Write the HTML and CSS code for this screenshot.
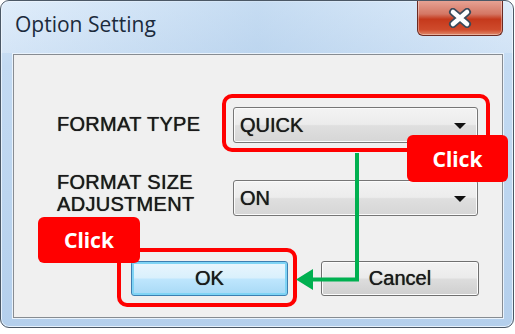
FILE: index.html
```html
<!DOCTYPE html>
<html lang="en">
<head>
    <meta charset="UTF-8">
    <meta name="viewport" content="width=device-width, initial-scale=1.0">
    <title>Option Setting</title>
    <link rel="stylesheet" href="styles.css">
</head>
<body>
    <div class="stage">
        <!-- Dialog window -->
        <div class="window">
            <div class="titlebar">
                <span class="title">Option Setting</span>
                <button class="close-btn" aria-label="Close">
                    <svg width="28" height="20" viewBox="0 0 28 20">
                        <path d="M7 4 L21 16 M21 4 L7 16" stroke="#3b4a5a" stroke-width="8" stroke-linecap="round"/>
                        <path d="M7 4 L21 16 M21 4 L7 16" stroke="#ffffff" stroke-width="4.5" stroke-linecap="round"/>
                    </svg>
                </button>
            </div>
            <div class="panel">
                <div class="form-grid">
                    <label class="field-label">FORMAT TYPE</label>
                    <div class="combo"><span>QUICK</span><i class="arrow"></i></div>

                    <label class="field-label two-line">FORMAT SIZE<br>ADJUSTMENT</label>
                    <div class="combo"><span>ON</span><i class="arrow"></i></div>
                </div>
                <div class="buttons">
                    <button class="btn btn-default">OK</button>
                    <button class="btn">Cancel</button>
                </div>
            </div>
        </div>

        <!-- Annotations drawn over the dialog -->
        <div class="highlight hl-combo"></div>
        <div class="highlight hl-ok"></div>
        <svg class="flow-arrow" width="515" height="334" viewBox="0 0 515 334">
            <path d="M357 153 V279.5 H310" fill="none" stroke="#00b050" stroke-width="4"/>
            <polygon points="296,279.5 313,269 313,290" fill="#00b050"/>
        </svg>
        <div class="badge badge-combo">Click</div>
        <div class="badge badge-ok">Click</div>
    </div>
</body>
</html>
```

FILE: styles.css
```css
body {
    margin: 0;
    padding: 0;
    background-color: #ffffff;
    font-family: "Liberation Sans", Arial, sans-serif;
}
.stage {
    position: relative;
    width: 515px;
    height: 334px;
}
.window {
    box-sizing: border-box;
    width: 514px;
    height: 328px;
    border: 1px solid #4b5866;
    border-radius: 9px;
    background: linear-gradient(180deg, #d5e7f9 0%, #c3daf2 20%, #bcd5ef 60%, #b4cfec 100%);
    box-shadow: inset 0 0 0 1px #e6f1fc;
    overflow: hidden;
}
.titlebar {
    display: flex;
    height: 52px;
    background: linear-gradient(90deg, rgba(255,255,255,0.25), rgba(170,200,230,0.35) 50%, rgba(255,255,255,0.2));
}
.title {
    padding: 9px 0 0 14px;
    font-family: "Open Sans", "Noto Sans", sans-serif;
    font-size: 21px;
    color: #1b2a3c;
}
.close-btn {
    display: flex;
    align-items: center;
    justify-content: center;
    margin: -1px 10px 0 auto;
    width: 86px;
    height: 36px;
    padding: 0;
    border: 1px solid #6b2a22;
    border-top: none;
    border-radius: 0 0 6px 6px;
    background: linear-gradient(180deg, #e8a597 0%, #d47764 40%, #c5391c 55%, #cf4b2c 85%, #e08a6c 100%);
    box-shadow: inset 0 0 0 1px rgba(255,255,255,0.35);
}
.panel {
    box-sizing: border-box;
    height: 264px;
    margin: 1px 10px 0 12px;
    border: 1px solid #878c92;
    background-color: #f0f0f0;
    box-shadow: 0 0 0 1px #eaf3fc;
}
.form-grid {
    display: grid;
    grid-template-columns: 176px 245px;
    row-gap: 37px;
    align-items: center;
    padding: 52px 0 0 43px;
}
.field-label {
    font-size: 20px;
    line-height: 21.5px;
    letter-spacing: 0.3px;
    color: #1a1a1a;
    text-shadow: 0 0 0.7px #1a1a1a;
}
.two-line {
    margin-top: -9px;
}
.combo {
    box-sizing: border-box;
    position: relative;
    display: flex;
    align-items: center;
    height: 36px;
    padding-left: 6px;
    border: 1px solid #767676;
    border-radius: 3px;
    background: linear-gradient(180deg, #f3f3f3 0%, #ececec 48%, #dfdfdf 52%, #d6d6d6 100%);
    box-shadow: inset 0 0 0 1px #fbfbfb;
    font-size: 20px;
    color: #1a1a1a;
    text-shadow: 0 0 0.7px #1a1a1a;
}
.arrow {
    position: absolute;
    right: 11px;
    top: 15px;
    width: 0;
    height: 0;
    border-left: 6px solid transparent;
    border-right: 6px solid transparent;
    border-top: 6px solid #111111;
}
.buttons {
    display: flex;
    justify-content: flex-end;
    gap: 33px;
    padding: 45px 23px 0 0;
}
.btn {
    box-sizing: border-box;
    width: 158px;
    height: 35px;
    border: 1px solid #707070;
    border-radius: 3px;
    background: linear-gradient(180deg, #f2f2f2 0%, #ebebeb 48%, #dddddd 52%, #cfcfcf 100%);
    box-shadow: inset 0 0 0 1px #fcfcfc;
    font-family: "Liberation Sans", Arial, sans-serif;
    font-size: 20px;
    color: #1a1a1a;
    text-shadow: 0 0 0.7px #1a1a1a;
}
.btn-default {
    width: 157px;
    border-color: #3c7fb1;
    background: linear-gradient(180deg, #eaf6fd 0%, #d9f0fc 48%, #bee6fd 52%, #a7d9f5 100%);
    box-shadow: inset 0 0 0 2px #7fd4f5;
}
.highlight {
    position: absolute;
    box-sizing: border-box;
    border: 4px solid #ff0000;
    border-radius: 10px;
}
.hl-combo {
    left: 222px;
    top: 94px;
    width: 268px;
    height: 58px;
}
.hl-ok {
    left: 117px;
    top: 248px;
    width: 180px;
    height: 59px;
}
.flow-arrow {
    position: absolute;
    left: 0;
    top: 0;
}
.badge {
    position: absolute;
    display: flex;
    align-items: center;
    justify-content: center;
    background-color: #ff0000;
    border-radius: 6px;
    color: #ffffff;
    font-family: "Noto Sans", "Open Sans", sans-serif;
    font-weight: bold;
    font-size: 21px;
}
.badge-combo {
    left: 407px;
    top: 135px;
    width: 101px;
    height: 47px;
}
.badge-ok {
    left: 38px;
    top: 217px;
    width: 102px;
    height: 46px;
}
```
